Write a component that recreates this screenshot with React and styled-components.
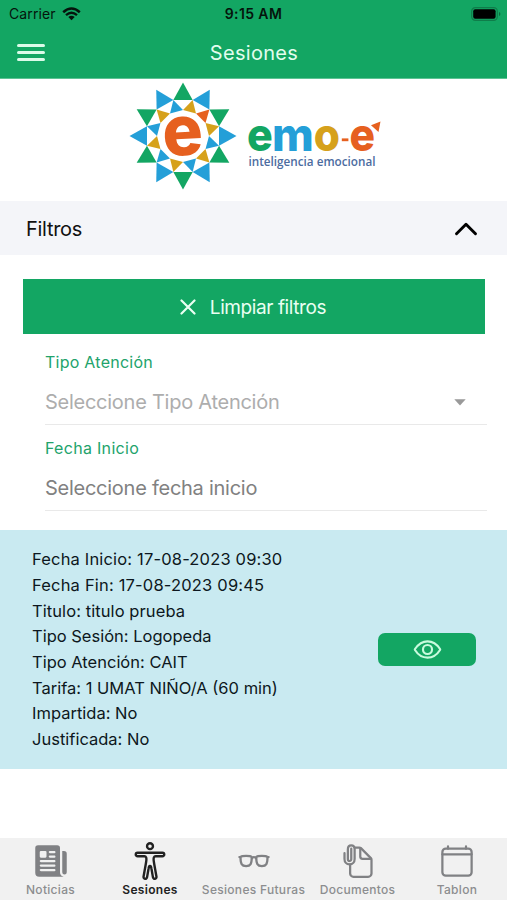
import React from 'react';
import styled, { createGlobalStyle } from 'styled-components';
import {
  IoNewspaper,
  IoBodyOutline,
  IoGlassesOutline,
  IoDocumentAttachOutline,
  IoCalendarClearOutline,
  IoEyeOutline,
} from 'react-icons/io5';

const GREEN = '#13a663';
const BLUE = '#249fd8';
const YELLOW = '#d6a11b';
const ORANGE = '#e6601f';

const session = [
  { name: 'Fecha Inicio', value: '17-08-2023 09:30', spacing: 0.17 },
  { name: 'Fecha Fin', value: '17-08-2023 09:45', spacing: 0.18 },
  { name: 'Titulo', value: 'titulo prueba', spacing: 0.08 },
  { name: 'Tipo Sesión', value: 'Logopeda' },
  { name: 'Tipo Atención', value: 'CAIT' },
  { name: 'Tarifa', value: '1 UMAT NIÑO/A (60 min)' },
  { name: 'Impartida', value: 'No' },
  { name: 'Justificada', value: 'No' },
];

const tabs = [
  { label: 'Noticias', icon: <IoNewspaper />, width: 101 },
  { label: 'Sesiones', icon: <IoBodyOutline />, width: 98, active: true },
  { label: 'Sesiones Futuras', icon: <IoGlassesOutline />, width: 109 },
  { label: 'Documentos', icon: <IoDocumentAttachOutline />, width: 99 },
  { label: 'Tablon', icon: <IoCalendarClearOutline />, width: 100 },
];

const innerColors = [
  YELLOW, ORANGE, YELLOW, BLUE, YELLOW, BLUE,
  YELLOW, BLUE, YELLOW, BLUE, YELLOW, BLUE,
];

const letters = [
  { char: 'e', x: 119, width: 25.8, color: GREEN },
  { char: 'm', x: 143.9, width: 41.8, color: BLUE },
  { char: 'o', x: 185.8, width: 26.2, color: YELLOW },
  { char: 'e', x: 221.6, width: 25.6, color: ORANGE },
];

const point = (deg, r) => {
  const a = (deg * Math.PI) / 180;
  return `${(r * Math.sin(a)).toFixed(2)},${(-r * Math.cos(a)).toFixed(2)}`;
};

const triangle = (deg, tip, base) =>
  [point(deg, tip), point(deg - 15, base), point(deg + 15, base)].join(' ');

const Logo = () => (
  <LogoSvg viewBox="0 0 254 110">
    <g transform="translate(55 55)">
      {innerColors.map((color, i) => (
        <g key={i}>
          <polygon points={triangle(i * 30, 53.5, 37.3)} fill={i % 2 ? BLUE : GREEN} />
          <polygon points={triangle(i * 30 + 15, 37.3, 26)} fill={color} />
        </g>
      ))}
      <text
        x="-20.6" y="19.2" fontSize="70" fill={ORANGE}
        textLength="40.5" lengthAdjust="spacingAndGlyphs" transform="rotate(-3)"
      >e</text>
    </g>
    {letters.map(({ char, x, width, color }) => (
      <text
        key={x} x={x} y="70.4" fontSize="46" fill={color}
        textLength={width} lengthAdjust="spacingAndGlyphs"
      >{char}</text>
    ))}
    <rect x="213.8" y="57.4" width="6.6" height="2.8" fill={ORANGE} />
    <polygon points="252.5,40.6 243,44.2 250.5,51" fill={ORANGE} />
    <Tagline x="120.5" y="84.5" textLength="127" lengthAdjust="spacingAndGlyphs">inteligencia emocional</Tagline>
  </LogoSvg>
);

const App = () => (
  <Screen>
    <GlobalStyle />
    <Header>
      <StatusBar>
        <Carrier>
          Carrier
          <svg width="19" height="14" viewBox="0 0 19 14" fill="none" stroke="#05140c">
            <path d="M1.2 5.2Q9.5-2.2 17.8 5.2" strokeWidth="2.5" />
            <path d="M4 8.2Q9.5 3.2 15 8.2" strokeWidth="2.3" />
            <path d="M9.5 13.2L6.3 10.1Q9.5 7.6 12.7 10.1Z" fill="#05140c" stroke="none" />
          </svg>
        </Carrier>
        <Clock>9:15 AM</Clock>
        <Battery viewBox="0 0 30 14">
          <rect x="0.7" y="0.7" width="25.6" height="12.6" rx="3.6" fill="none" stroke="#0f7d4a" strokeWidth="1.2" />
          <rect x="2.2" y="2.2" width="22.4" height="9.6" rx="2" fill="#000" />
          <path d="M28 5v4q1.4-.6 1.4-2t-1.4-2z" fill="#0b6b3f" />
        </Battery>
      </StatusBar>
      <TitleBar>
        <MenuButton aria-label="Menu"><i /><i /><i /></MenuButton>
        <Title>Sesiones</Title>
      </TitleBar>
    </Header>
    <Brand><Logo /></Brand>
    <FilterHeader>
      <span>Filtros</span>
      <svg width="24" height="16" viewBox="0 0 24 16" fill="none" stroke="#000" strokeWidth="2.9" strokeLinecap="round" strokeLinejoin="round">
        <path d="M2.5 12.8L12 3.2l9.5 9.6" />
      </svg>
    </FilterHeader>
    <ClearButton>
      <svg width="16" height="16" viewBox="0 0 16 16" stroke="#eafff2" strokeWidth="2.2" strokeLinecap="round">
        <path d="M1.5 1.5l13 13M14.5 1.5l-13 13" />
      </svg>
      <span>Limpiar filtros</span>
    </ClearButton>
    <Fields>
      <Field>
        <Label $spacing={0.25}>Tipo Atención</Label>
        <Value $color="#adadad">
          Seleccione Tipo Atención
          <svg width="12" height="7" viewBox="0 0 12 7" fill="#999"><path d="M.3.3h11.4L6 6.5z" /></svg>
        </Value>
      </Field>
      <Field>
        <Label $spacing={0.3}>Fecha Inicio</Label>
        <Value $color="#818181">Seleccione fecha inicio</Value>
      </Field>
    </Fields>
    <Session>
      <Details>
        {session.map(({ name, value, spacing }) => (
          <Detail key={name} $spacing={spacing}>{name}: {value}</Detail>
        ))}
      </Details>
      <ViewButton aria-label="Ver"><IoEyeOutline /></ViewButton>
    </Session>
    <TabBar>
      {tabs.map(({ label, icon, width, active }) => (
        <Tab key={label} $width={width} $active={active}>
          <TabIcon $active={active}>{icon}</TabIcon>
          <span>{label}</span>
        </Tab>
      ))}
    </TabBar>
  </Screen>
);

const GlobalStyle = createGlobalStyle`
  * {
    box-sizing: border-box;
  }
  body {
    margin: 0;
    background: #fff;
  }
  button {
    font: inherit;
    border: 0;
    padding: 0;
  }
`;

const Screen = styled.div`
  display: flex;
  flex-direction: column;
  width: 507px;
  height: 900px;
  overflow: hidden;
  background: #fff;
  font-family: Inter, 'Liberation Sans', sans-serif;
`;

const Header = styled.header`
  flex: none;
  height: 79px;
  background: ${GREEN};
  border-bottom: 1px solid #5cc393;
`;

const StatusBar = styled.div`
  display: grid;
  grid-template-columns: 1fr auto 1fr;
  align-items: center;
  height: 27px;
  padding: 0 6px 0 9px;
  color: #05140c;
  font-size: 14px;
`;

const Carrier = styled.div`
  display: flex;
  align-items: center;
  gap: 6px;
  letter-spacing: 0.1px;
`;

const Clock = styled.span`
  margin-left: -3px;
  font-weight: 600;
  letter-spacing: 0.4px;
`;

const Battery = styled.svg`
  justify-self: end;
  width: 30px;
  height: 14px;
`;

const TitleBar = styled.div`
  display: grid;
  grid-template-columns: 1fr auto 1fr;
  align-items: center;
  height: 51px;
  padding: 0 16px 0 17px;
`;

const MenuButton = styled.button`
  display: flex;
  flex-direction: column;
  gap: 4.5px;
  width: 28px;
  background: none;

  & i {
    height: 2.7px;
    border-radius: 2px;
    background: #dcfbe9;
  }
`;

const Title = styled.h1`
  margin: 0;
  color: #e2fdee;
  font-size: 20px;
  font-weight: 400;
  letter-spacing: 0.3px;
`;

const Brand = styled.div`
  flex: none;
  display: flex;
  justify-content: center;
  height: 122px;
  padding-top: 2px;
`;

const LogoSvg = styled.svg`
  width: 254px;
  height: 110px;
  margin-left: 3px;
  overflow: visible;
  font-family: Inter, sans-serif;
  font-weight: 800;
`;

const Tagline = styled.text`
  fill: #4c6c9f;
  font-family: 'Open Sans', sans-serif;
  font-size: 12px;
  font-weight: 600;
`;

const FilterHeader = styled.div`
  flex: none;
  display: flex;
  align-items: center;
  justify-content: space-between;
  height: 54px;
  padding: 1px 29px 0 26px;
  background: #f4f5f9;
  color: #111;
  font-size: 20px;
  letter-spacing: -0.3px;
`;

const ClearButton = styled.button`
  && {
    flex: none;
    display: flex;
    align-items: center;
    justify-content: center;
    gap: 14px;
    height: 55px;
    margin: 24px 22px 0 23px;
    padding: 1px 2px 0 0;
    background: ${GREEN};
    color: #eafff2;
    font-size: 19px;
    letter-spacing: -0.4px;
  }
`;

const Fields = styled.div`
  flex: none;
  height: 196px;
  padding: 5px 20px 0 45px;
`;

const Field = styled.div`
  display: flex;
  flex-direction: column;
  height: 86px;
  border-bottom: 1px solid #e9e9e9;
`;

const Label = styled.label`
  padding-top: 13px;
  color: #22a36b;
  font-size: 16px;
  line-height: 20px;
  letter-spacing: ${({ $spacing }) => $spacing}px;
`;

const Value = styled.div`
  display: flex;
  align-items: center;
  justify-content: space-between;
  padding: 17px 21px 0 0;
  color: ${({ $color }) => $color};
  font-size: 20px;
  line-height: 26px;
  letter-spacing: -0.26px;
`;

const Session = styled.section`
  flex: none;
  display: flex;
  align-items: center;
  justify-content: space-between;
  height: 239px;
  padding: 0 31px 0 32px;
  background: #c9eaf1;
`;

const Details = styled.ul`
  margin: 0;
  padding: 1px 0 0;
  list-style: none;
  color: #0d1720;
  font-size: 16.5px;
  line-height: 25.65px;
`;

const Detail = styled.li`
  letter-spacing: ${({ $spacing = 0 }) => $spacing}px;
`;

const ViewButton = styled.button`
  display: flex;
  align-items: center;
  justify-content: center;
  width: 98px;
  height: 33px;
  border-radius: 7px;
  background: ${GREEN};
  color: #c8fadd;

  & svg {
    width: 29px;
    height: 29px;
  }
  & path,
  & circle {
    stroke-width: 38px;
  }
`;

const TabBar = styled.nav`
  display: flex;
  flex: none;
  height: 62px;
  margin-top: auto;
  background: #f1f1f1;
`;

const Tab = styled.div`
  display: flex;
  flex-direction: column;
  align-items: center;
  width: ${({ $width }) => $width}px;
  padding-top: 4px;
  color: ${({ $active }) => ($active ? '#222' : '#8c8d8f')};
  font-size: 12px;
  font-weight: ${({ $active }) => ($active ? 600 : 500)};
  white-space: nowrap;

  & > span {
    margin-top: 2px;
    line-height: 15px;
    letter-spacing: 0.3px;
  }
`;

const TabIcon = styled.div`
  display: flex;
  align-items: center;
  justify-content: center;
  height: 38px;
  color: ${({ $active }) => ($active ? '#222' : '#808184')};

  & svg {
    width: ${({ $active }) => ($active ? 38 : 36)}px;
    height: ${({ $active }) => ($active ? 38 : 36)}px;
  }
`;

export default App;
